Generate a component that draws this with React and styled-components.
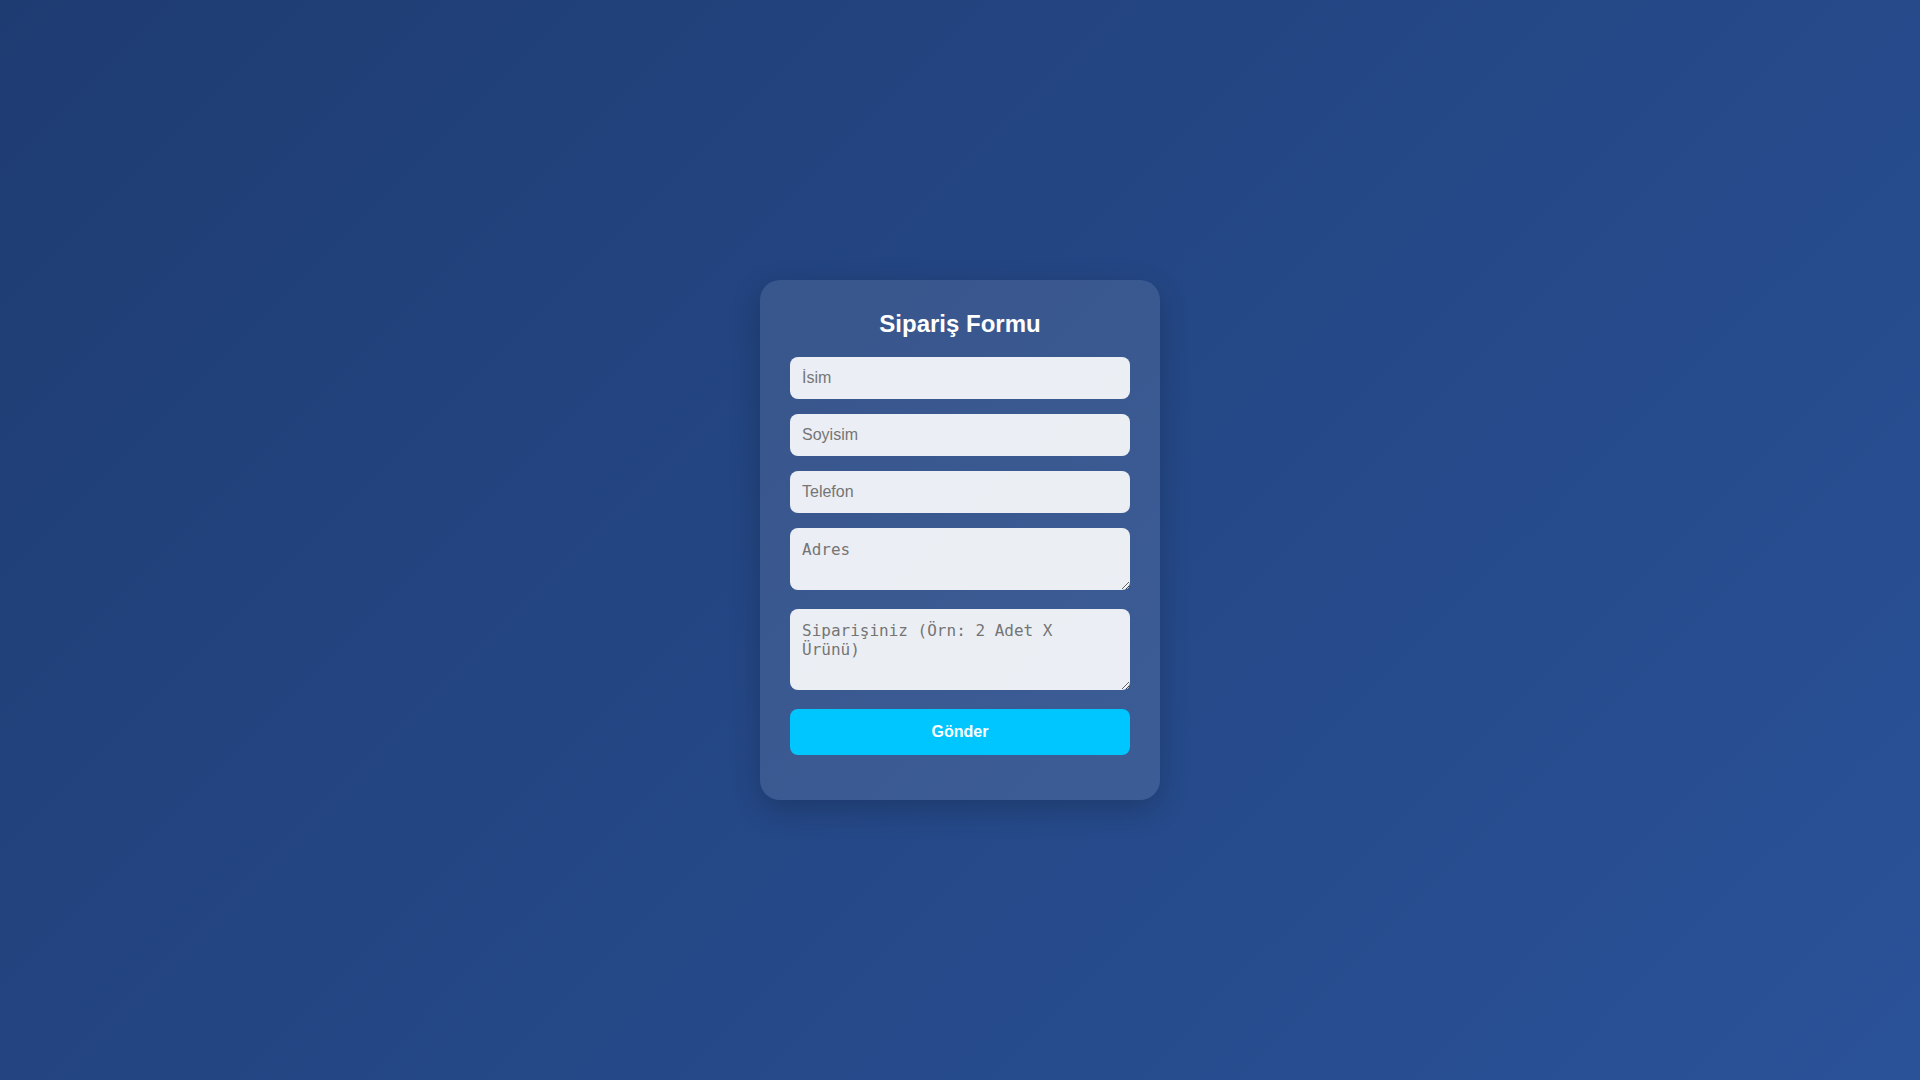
import styled, { createGlobalStyle } from 'styled-components';

const GlobalStyle = createGlobalStyle`
  * {
    box-sizing: border-box;
  }
  html, body {
    margin: 0;
    padding: 0;
  }
  body {
    font-family: "Liberation Sans", Arial, sans-serif;
    background: linear-gradient(135deg, #1e3c72, #2a5298);
    min-height: 100vh;
  }
`;

const Page = styled.div`
  min-height: 100vh;
  display: flex;
  justify-content: center;
  align-items: center;
`;

const Card = styled.form`
  width: 400px;
  padding: 30px;
  background: rgba(255, 255, 255, 0.1);
  border-radius: 20px;
  box-shadow: 0 10px 30px rgba(0, 0, 0, 0.2);
  display: flex;
  flex-direction: column;
`;

const Title = styled.h2`
  margin: 0 0 20px;
  font-size: 24px;
  line-height: 27px;
  font-weight: 700;
  color: #ffffff;
  text-align: center;
`;

const Input = styled.input`
  display: block;
  width: 100%;
  height: 42px;
  margin: 0 0 15px;
  padding: 12px;
  border: none;
  border-radius: 8px;
  background: rgba(255, 255, 255, 0.9);
  font-family: "Liberation Sans", Arial, sans-serif;
  font-size: 16px;
  color: #222;
  outline: none;

  &::placeholder {
    color: #757575;
  }
`;

// textarea keeps the browser's monospace font, like the original form
const TextArea = styled.textarea`
  display: block;
  width: 100%;
  height: ${(p) => p.$h}px;
  margin: 0 0 19px;
  padding: 12px;
  border: none;
  border-radius: 8px;
  background: rgba(255, 255, 255, 0.9);
  font-family: "DejaVu Sans Mono", monospace;
  font-size: 16px;
  color: #222;
  outline: none;

  &::placeholder {
    color: #757575;
  }
`;

const SubmitButton = styled.button`
  width: 100%;
  height: 46px;
  margin: 0 0 15px;
  border: none;
  border-radius: 8px;
  background-color: #00c6ff;
  color: #ffffff;
  font-family: "Liberation Sans", Arial, sans-serif;
  font-size: 16px;
  font-weight: 700;
  cursor: pointer;

  &:hover {
    background-color: #00b4e8;
  }
`;

export default function App() {
  const handleSubmit = (e) => {
    e.preventDefault();
  };

  return (
    <>
      <GlobalStyle />
      <Page>
        <Card onSubmit={handleSubmit}>
          <Title>Sipariş Formu</Title>
          <Input type="text" placeholder="İsim" />
          <Input type="text" placeholder="Soyisim" />
          <Input type="tel" placeholder="Telefon" />
          <TextArea $h={62} placeholder="Adres" />
          <TextArea $h={81} placeholder="Siparişiniz (Örn: 2 Adet X Ürünü)" />
          <SubmitButton type="submit">Gönder</SubmitButton>
        </Card>
      </Page>
    </>
  );
}
